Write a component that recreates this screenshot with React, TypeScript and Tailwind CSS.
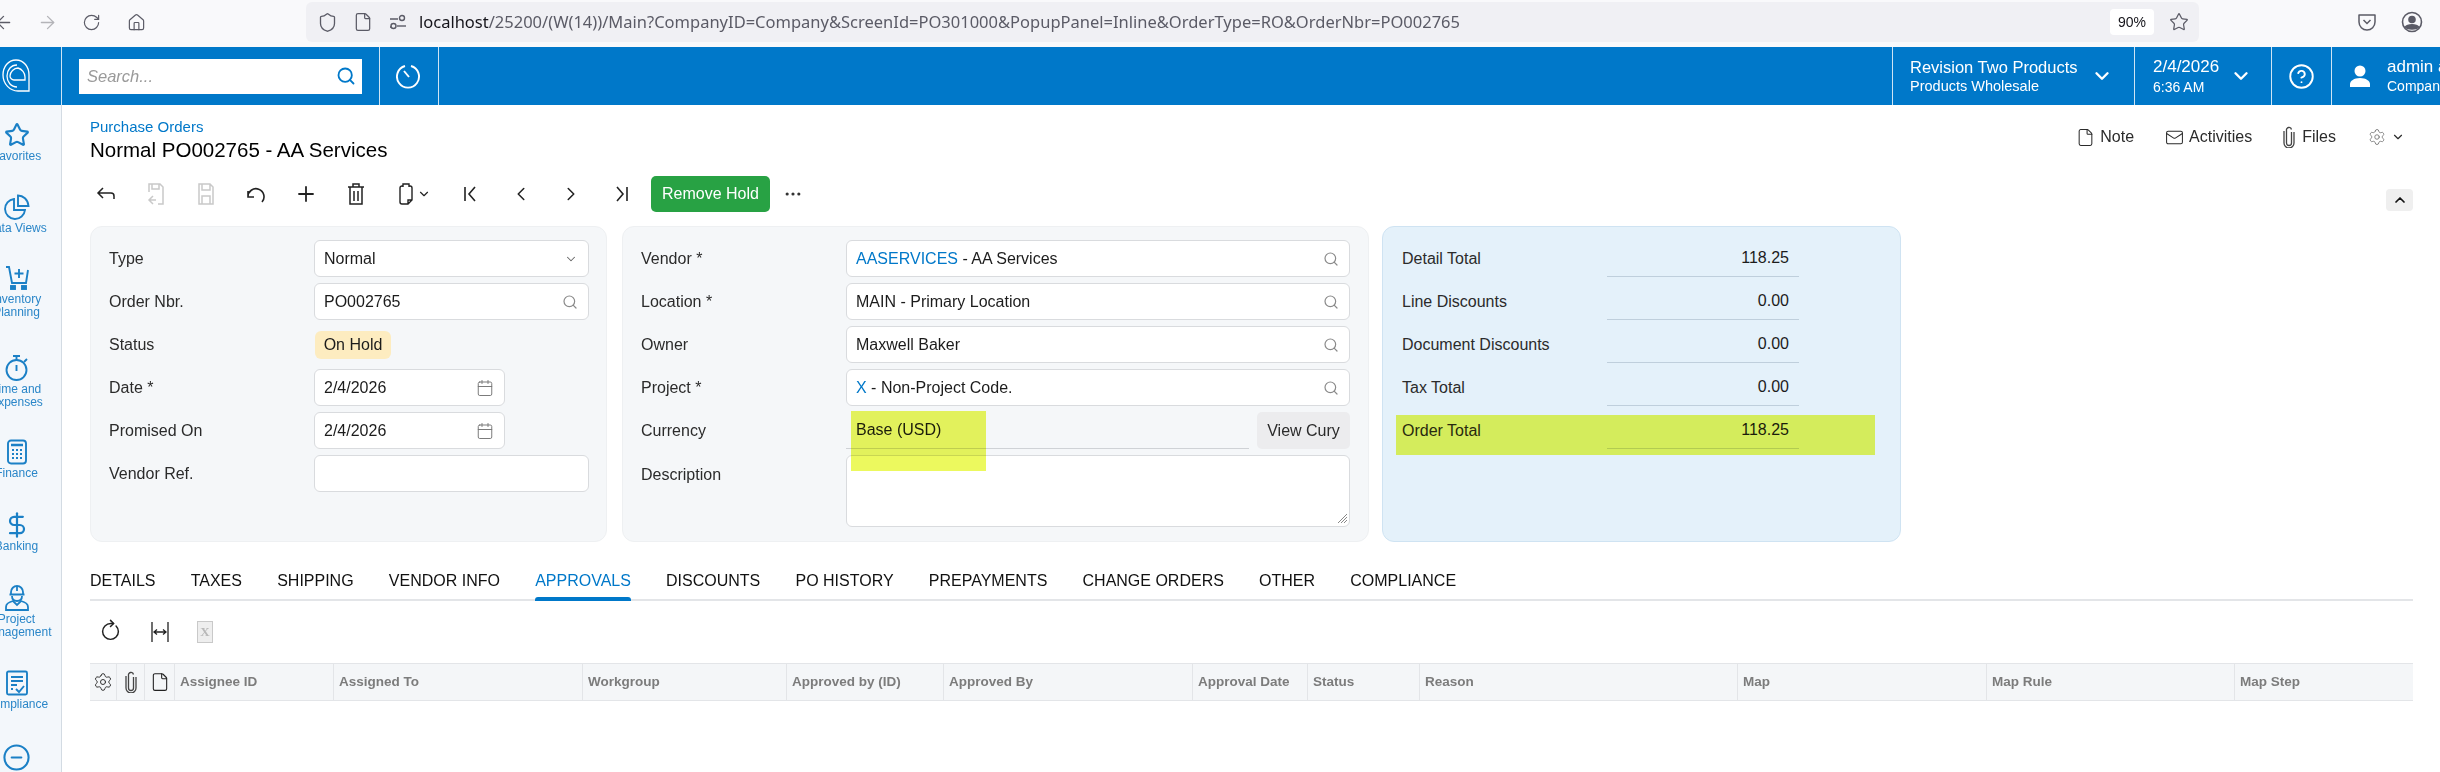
import { ArrowRight, Calendar, ChevronDown, ChevronLeft, ChevronRight, ChevronUp, CircleHelp, CircleMinus, DollarSign, Ellipsis, File, Home, Mail, Plus, RotateCw, Search, Settings, Shield, Star } from 'lucide-react'
import type { ReactNode } from 'react'

const Logo = () => (
    <svg width="30" height="36" viewBox="0 0 30 36" fill="none" stroke="white" strokeWidth="1.3">
        <path d="M15 2C7 2 2 9 2 17c0 9 7 16 15 16h11V17C28 9 23 2 15 2z" />
        <path d="M16 7C10 7 6 12 6 18c0 6 4 11 10 11" />
        <path d="M9 18c0-4 4-8 8-8 4 1 7 5 7 9v3H13c-2 0-4-2-4-4z" />
    </svg>
)

const Cart = () => (
    <svg width="26" height="26" viewBox="0 0 26 26" fill="none" stroke="#1b80c6" strokeWidth="1.9">
        <path d="M2 2h3l3 16h14l2-13" />
        <path d="M15 4v9M10.5 8.5h9" />
        <rect x="7" y="21" width="4" height="3" fill="#1b80c6" />
        <rect x="18" y="21" width="4" height="3" fill="#1b80c6" />
    </svg>
)

const Pie = () => (
    <svg width="26" height="26" viewBox="0 0 26 26" fill="none" stroke="#1b80c6" strokeWidth="1.9">
        <path d="M10 5a10 10 0 1 0 11 11H10z" />
        <path d="M14 1.5c5 0 10 4 10.500 10.500H14z" />
    </svg>
)

const Watch = () => (
    <svg width="26" height="28" viewBox="0 0 26 28" fill="none" stroke="#1b80c6" strokeWidth="1.9">
        <circle cx="12.500" cy="16" r="10" />
        <path d="M9 2h7M12.500 2v4M12.500 11v6M20 8l3-3" />
    </svg>
)

const Calc = () => (
    <svg width="22" height="26" viewBox="0 0 22 26" fill="none" stroke="#1b80c6" strokeWidth="1.9">
        <rect x="2" y="1.500" width="18" height="23" rx="3" />
        <path d="M5 6h12" strokeWidth="2.500" />
        <path d="M6 11h2M10 11h2M14 11h2M6 15h2M10 15h2M14 15h2M6 19h2M10 19h2M14 19h2" strokeWidth="2" />
    </svg>
)

const Worker = () => (
    <svg width="26" height="26" viewBox="0 0 26 26" fill="none" stroke="#1b80c6" strokeWidth="1.8">
        <path d="M7 9V7a6 6 0 0 1 12 0v2M5.500 9.500h15" />
        <path d="M13 1v5" />
        <path d="M8 11c0 3 2 5 5 5s5-2 5-5" />
        <path d="M2 25v-3c0-3 3-5 7-6l4 4 4-4c4 1 7 3 7 6v3z" />
    </svg>
)

const Checklist = () => (
    <svg width="24" height="26" viewBox="0 0 24 26" fill="none" stroke="#1b80c6" strokeWidth="1.9">
        <rect x="2" y="1.500" width="20" height="23" rx="1.500" />
        <path d="M6 7h12M6 11h12M6 15h6M6 19h2M11 19l3 3 5-6" />
    </svg>
)

const UserFill = () => (
    <svg width="22" height="24" viewBox="0 0 22 24" fill="white" className="shrink-0">
        <circle cx="11" cy="7" r="5.500" />
        <path d="M1 23v-3c0-3 4-6 10-6s10 3 10 6v3z" />
    </svg>
)

const Timer = () => (
    <svg width="26" height="28" viewBox="0 0 26 28" fill="none" stroke="white" strokeWidth="1.900">
        <path d="M9 4a11 11 0 1 0 6 0" />
        <path d="M8 9l5 6" />
    </svg>
)

const Pocket = () => (
    <svg width="20" height="20" viewBox="0 0 20 20" fill="none" stroke="#5b5b66" strokeWidth="1.500">
        <path d="M2 3h16v7a8 8 0 0 1-16 0z" strokeLinejoin="round" />
        <path d="M6.500 8l3.500 3.500L13.500 8" />
    </svg>
)

const Account = () => (
    <svg width="22" height="22" viewBox="0 0 22 22" fill="none" stroke="#5b5b66" strokeWidth="1.600">
        <circle cx="11" cy="11" r="9.500" />
        <circle cx="11" cy="8.500" r="3" fill="#5b5b66" />
        <path d="M4.500 16c2-3 11-3 13 0-2 2.500-11 2.500-13 0z" fill="#5b5b66" />
    </svg>
)

const Toggles = () => (
    <svg width="18" height="16" viewBox="0 0 18 16" fill="none" stroke="#5b5b66" strokeWidth="1.400">
        <path d="M1 5h8M1 13h1" />
        <circle cx="13" cy="4" r="2.500" />
        <circle cx="4.500" cy="12" r="2.500" />
        <path d="M8 12h9" />
    </svg>
)

const BackHook = () => (
    <svg width="22" height="22" viewBox="0 0 22 22" fill="none" stroke="#222" strokeWidth="1.500">
        <path d="M8 5l-5 5 5 5M3 10h13c2 0 3 1.500 3 3v3" />
    </svg>
)

const SaveBack = () => (
    <svg width="20" height="24" viewBox="0 0 20 24" fill="none" stroke="#c9c9c9" strokeWidth="1.500">
        <path d="M3 10V2h11l3 3v17h-5M6 2v5h7V2M7 14l-4 4 4 4M3 18h7" />
    </svg>
)

const SaveIcon = () => (
    <svg width="20" height="24" viewBox="0 0 20 24" fill="none" stroke="#c9c9c9" strokeWidth="1.500">
        <path d="M3 2h11l3 3v17H3zM6 2v6h8V2M6 22v-8h8v8" />
    </svg>
)

const UndoIcon = () => (
    <svg width="22" height="22" viewBox="0 0 22 22" fill="none" stroke="#222" strokeWidth="1.600">
        <path d="M3 8v6h6M3 14a8 8 0 1 1 14 5" />
    </svg>
)

const Trash = () => (
    <svg width="20" height="24" viewBox="0 0 20 24" fill="none" stroke="#222" strokeWidth="1.500">
        <path d="M2 5h16M7 5V2h6v3M4 5v17h12V5M8 9v10M12 9v10" />
    </svg>
)

const CopyDoc = () => (
    <svg width="14" height="24" viewBox="0 0 14 24" fill="none" stroke="#222" strokeWidth="1.400">
        <path d="M4 4H3a2 2 0 0 0-2 2v14a2 2 0 0 0 2 2h6l4-4V6a2 2 0 0 0-2-2h-1M4 5V2h6v3M9 22v-4h4" />
    </svg>
)

const BarChevron = ({ flip }: { flip?: boolean }) => (
    <svg width="20" height="22" viewBox="0 0 20 22" fill="none" stroke="#222" strokeWidth="1.600" className={flip ? 'rotate-180' : ''}>
        <path d="M4 4v14M14 4l-6 7 6 7" />
    </svg>
)

const Clip = ({ className = '' }: { className?: string }) => (
    <svg width="12" height="22" viewBox="0 0 12 22" fill="none" stroke="#444" strokeWidth="1.300" className={className}>
        <path d="M8.500 6v11a2.500 2.500 0 0 1-5 0V4.500a2.500 2.500 0 0 1 5-1M11 6v11a5 5 0 0 1-10 0V5" />
    </svg>
)

const sideItems = [
    { h: 'h-[72px]', icon: <Star size={26} strokeWidth={2} color="#1b80c6" />, label: ['Favorites'] },
    { h: 'h-[71px]', icon: <Pie />, label: ['Data Views'] },
    { h: 'h-[90px]', icon: <Cart />, label: ['Inventory', 'Planning'] },
    { h: 'h-[84px]', icon: <Watch />, label: ['Time and', 'Expenses'] },
    { h: 'h-[73px]', icon: <Calc />, label: ['Finance'] },
    { h: 'h-[73px]', icon: <DollarSign size={28} strokeWidth={1.9} color="#1b80c6" />, label: ['Banking'] },
    { h: 'h-[85px]', icon: <Worker />, label: ['Project', 'Management'] },
    { h: 'h-[74px]', icon: <Checklist />, label: ['Compliance'] },
    { h: 'h-[26px]', icon: <CircleMinus size={29} strokeWidth={1.700} color="#1b80c6" />, label: [] },
]

const Row = ({ label, children }: { label: string; children: ReactNode }) => (
    <div className="flex h-[37px] items-center">
        <div className="w-[205px] shrink-0 text-[#2b2b2b]">{label}</div>
        {children}
    </div>
)

const Input = ({ children, icon, width = 'w-[275px]' }: { children?: ReactNode; icon?: ReactNode; width?: string }) => (
    <div className={`${width} flex h-[37px] items-center justify-between rounded-[6px] border border-[#d9dbde] bg-white pl-[9px] pr-[10px] text-[#1c1c1c]`}>
        <span>{children}</span>
        {icon}
    </div>
)

const Lens = () => <Search size={16} strokeWidth={1.800} color="#8a8a8a" />
const Cal = () => <Calendar size={18} strokeWidth={1.300} color="#777" />

const TotalRow = ({ label, value }: { label: string; value: string }) => (
    <div className="flex h-[37px] items-center">
        <div className="w-[205px] shrink-0 text-[#2b2b2b]">{label}</div>
        <div className="flex h-[37px] w-[192px] items-center justify-end border-b border-[#bfcfdc] pr-[10px] text-[#1c1c1c]">{value}</div>
    </div>
)

const tabs = ['DETAILS', 'TAXES', 'SHIPPING', 'VENDOR INFO', 'APPROVALS', 'DISCOUNTS', 'PO HISTORY', 'PREPAYMENTS', 'CHANGE ORDERS', 'OTHER', 'COMPLIANCE']

const columns = [
    { w: 'w-[159px]', name: 'Assignee ID' },
    { w: 'w-[249px]', name: 'Assigned To' },
    { w: 'w-[204px]', name: 'Workgroup' },
    { w: 'w-[157px]', name: 'Approved by (ID)' },
    { w: 'w-[249px]', name: 'Approved By' },
    { w: 'w-[115px]', name: 'Approval Date' },
    { w: 'w-[112px]', name: 'Status' },
    { w: 'w-[318px]', name: 'Reason' },
    { w: 'w-[249px]', name: 'Map' },
    { w: 'w-[248px]', name: 'Map Rule' },
    { w: 'w-[179px]', name: 'Map Step' },
]

export default function App() {
    return (
        <div className="h-[772px] w-[2440px] overflow-hidden bg-white text-[16px] font-['Liberation_Sans',Arial,sans-serif]">
            {/* browser bar */}
            <div className="flex h-[47px] items-start bg-[#f9f9fb] pt-[2px]">
                <div className="flex h-[40px] w-[306px] shrink-0 items-center overflow-hidden text-[#5b5b66]">
                    <div className="-ml-[19px] flex w-[44px] shrink-0 justify-center"><ArrowRight size={21} strokeWidth={1.500} className="rotate-180" /></div>
                    <div className="flex w-[44px] shrink-0 justify-center"><ArrowRight size={21} strokeWidth={1.500} color="#b4b4b8" /></div>
                    <div className="flex w-[45px] shrink-0 justify-center"><RotateCw size={19} strokeWidth={1.500} /></div>
                    <div className="flex w-[44px] shrink-0 justify-center"><Home size={19} strokeWidth={1.500} /></div>
                </div>
                <div className="flex h-[40px] w-[1893px] shrink-0 items-center rounded-[6px] bg-[#f0f0f4] pl-[11px] text-[#5b5b66]">
                    <Shield size={21} strokeWidth={1.500} />
                    <File size={20} strokeWidth={1.500} className="ml-[15px]" />
                    <div className="ml-[16px]"><Toggles /></div>
                    <div className="ml-[12px] whitespace-nowrap font-['Noto_Sans',sans-serif] text-[16.500px]"><span className="text-[#15141a]">localhost</span>/25200/(W(14))/Main?CompanyID=Company&amp;ScreenId=PO301000&amp;PopupPanel=Inline&amp;OrderType=RO&amp;OrderNbr=PO002765</div>
                    <div className="ml-auto flex h-[26px] w-[44px] items-center justify-center rounded-[4px] bg-white text-[14px] text-[#15141a]">90%</div>
                    <Star size={20} strokeWidth={1.500} className="ml-[15px] mr-[10px]" />
                </div>
                <div className="flex h-[40px] flex-1 items-center">
                    <div className="ml-[158px]"><Pocket /></div>
                    <div className="ml-[24px]"><Account /></div>
                </div>
            </div>

            {/* blue header */}
            <div className="flex h-[58px] items-stretch bg-[#0078c9] text-white">
                <div className="flex w-[62px] shrink-0 items-center justify-start border-r border-[#cfe4f4] pl-[1px]"><Logo /></div>
                <div className="flex w-[318px] shrink-0 items-center border-r border-[#cfe4f4] pl-[17px]">
                    <div className="flex h-[35px] w-[283px] items-center justify-between bg-white pl-[8px] pr-[6px] text-[16.500px] italic text-[#9a9a9a]">
                        Search...
                        <Search size={20} strokeWidth={2.200} color="#0078c9" />
                    </div>
                </div>
                <div className="flex w-[59px] shrink-0 items-center justify-center border-r border-[#cfe4f4]"><Timer /></div>
                <div className="flex-1" />
                <div className="flex w-[242px] shrink-0 items-center border-l border-[#cfe4f4] pl-[17px]">
                    <div className="w-[172px] whitespace-nowrap">
                        <div className="text-[16.500px] leading-[20px]">Revision Two Products</div>
                        <div className="text-[14.500px] leading-[18px]">Products Wholesale</div>
                    </div>
                    <ChevronDown size={22} strokeWidth={2.600} className="ml-[9px]" />
                </div>
                <div className="flex w-[137px] shrink-0 items-center border-l border-[#cfe4f4] pl-[18px]">
                    <div className="w-[73px]">
                        <div className="text-[17px] leading-[21px]">2/4/2026</div>
                        <div className="text-[14px] leading-[20px]">6:36 AM</div>
                    </div>
                    <ChevronDown size={22} strokeWidth={2.600} className="ml-[4px]" />
                </div>
                <div className="flex w-[60px] shrink-0 items-center justify-center border-l border-[#cfe4f4]"><CircleHelp size={27} strokeWidth={1.700} /></div>
                <div className="flex w-[109px] shrink-0 items-center overflow-hidden border-l border-[#cfe4f4] pl-[17px]">
                    <UserFill />
                    <div className="ml-[16px] whitespace-nowrap">
                        <div className="text-[17px] leading-[21px]">admin admin</div>
                        <div className="text-[14px] leading-[19px]">Company</div>
                    </div>
                </div>
            </div>

            <div className="flex h-[667px]">
                {/* side nav */}
                <div className="w-[62px] shrink-0 overflow-hidden border-r border-[#d3dbe3] bg-[#f3f7fb] pt-[17px]">
                    <div className="-ml-[20px] w-[73px]">
                        {sideItems.map((item) => (
                            <div key={item.h + item.label.join()} className={`${item.h} flex flex-col items-center`}>
                                <div className="flex h-[26px] items-center justify-center">{item.icon}</div>
                                <div className="mt-[2px] whitespace-nowrap text-center text-[12px] leading-[13px] text-[#2a86c8]">
                                    {item.label.map((l) => <div key={l}>{l}</div>)}
                                </div>
                            </div>
                        ))}
                    </div>
                </div>

                {/* page */}
                <div className="w-[2351px] shrink-0 pl-[28px] pt-[13px]">
                    <div className="flex items-start justify-between">
                        <div>
                            <div className="text-[15px] leading-[18px] text-[#0078c9]">Purchase Orders</div>
                            <div className="mt-[1px] text-[20.500px] leading-[26px] text-black">Normal PO002765 - AA Services</div>
                        </div>
                        <div className="mr-[8px] mt-[9px] flex h-[20px] items-center text-[16px] text-[#2b2b2b]">
                            <File size={19} strokeWidth={1.300} />
                            <span className="ml-[5px]">Note</span>
                            <Mail size={19} strokeWidth={1.300} className="ml-[31px]" />
                            <span className="ml-[5px]">Activities</span>
                            <Clip className="ml-[31px]" />
                            <span className="ml-[7px]">Files</span>
                            <Settings size={18} strokeWidth={1.200} color="#777" className="ml-[32px]" />
                            <ChevronDown size={14} strokeWidth={2} className="ml-[5px]" />
                        </div>
                    </div>

                    <div className="mt-[13px] flex h-[36px] items-center justify-between">
                        <div className="-ml-[9px] flex items-center">
                            <div className="flex w-[50px] justify-center"><BackHook /></div>
                            <div className="flex w-[50px] justify-center"><SaveBack /></div>
                            <div className="flex w-[50px] justify-center"><SaveIcon /></div>
                            <div className="flex w-[50px] justify-center"><UndoIcon /></div>
                            <div className="flex w-[50px] justify-center"><Plus size={24} strokeWidth={1.800} color="#222" /></div>
                            <div className="flex w-[50px] justify-center"><Trash /></div>
                            <div className="flex w-[50px] items-center justify-center"><CopyDoc /><ChevronDown size={14} strokeWidth={2} color="#222" className="-mr-[18px] ml-[4px]" /></div>
                            <div className="ml-[15px] flex w-[50px] justify-center"><BarChevron /></div>
                            <div className="flex w-[50px] justify-center"><ChevronLeft size={22} strokeWidth={1.700} color="#222" /></div>
                            <div className="flex w-[50px] justify-center"><ChevronRight size={22} strokeWidth={1.700} color="#222" /></div>
                            <div className="flex w-[50px] justify-center"><BarChevron flip /></div>
                            <div className="ml-[5px] flex h-[36px] w-[119px] items-center justify-center rounded-[5px] bg-[#28a244] text-[16px] text-white">Remove Hold</div>
                            <div className="ml-[13px]"><Ellipsis size={20} strokeWidth={1.800} color="#333" /></div>
                        </div>
                        <div className="mt-[12px] flex h-[22px] w-[27px] items-center justify-center rounded-[4px] bg-[#efefef]"><ChevronUp size={16} strokeWidth={2.600} color="#111" /></div>
                    </div>

                    {/* summary panels */}
                    <div className="mt-[14px] flex h-[316px] items-stretch">
                        <div className="flex w-[517px] flex-col gap-[6px] rounded-[12px] border border-[#eef0f2] bg-[#f5f7f9] pl-[18px] pt-[13px]">
                            <Row label="Type"><Input icon={<ChevronDown size={14} strokeWidth={1.800} color="#666" />}>Normal</Input></Row>
                            <Row label="Order Nbr."><Input icon={<Lens />}>PO002765</Input></Row>
                            <Row label="Status"><div className="ml-[1px] flex h-[28px] w-[76px] items-center justify-center rounded-[6px] bg-[#fdecc0] text-[#1c1c1c]">On Hold</div></Row>
                            <Row label="Date *"><Input width="w-[191px]" icon={<Cal />}>2/4/2026</Input></Row>
                            <Row label="Promised On"><Input width="w-[191px]" icon={<Cal />}>2/4/2026</Input></Row>
                            <Row label="Vendor Ref."><Input /></Row>
                        </div>

                        <div className="relative ml-[15px] flex w-[747px] flex-col gap-[6px] rounded-[12px] border border-[#eef0f2] bg-[#f5f7f9] pl-[18px] pt-[13px]">
                            <Row label="Vendor *"><Input width="w-[504px]" icon={<Lens />}><span className="text-[#0078c9]">AASERVICES</span> - AA Services</Input></Row>
                            <Row label="Location *"><Input width="w-[504px]" icon={<Lens />}>MAIN - Primary Location</Input></Row>
                            <Row label="Owner"><Input width="w-[504px]" icon={<Lens />}>Maxwell Baker</Input></Row>
                            <Row label="Project *"><Input width="w-[504px]" icon={<Lens />}><span className="text-[#0078c9]">X</span> - Non-Project Code.</Input></Row>
                            <Row label="Currency">
                                <div className="flex h-[37px] w-[403px] items-center border-b border-[#cfd2d6] pl-[10px] text-[#1c1c1c]">Base (USD)</div>
                                <div className="ml-[8px] flex h-[37px] w-[93px] items-center justify-center rounded-[5px] bg-[#ececee] text-[#2b2b2b]">View Cury</div>
                            </Row>
                            <div className="flex h-[72px]">
                                <div className="w-[205px] shrink-0 pt-[8px] text-[#2b2b2b]">Description</div>
                                <div className="relative h-[72px] w-[504px] rounded-[6px] border border-[#d9dbde] bg-white">
                                    <svg width="12" height="12" viewBox="0 0 12 12" stroke="#888" strokeWidth="1" className="absolute bottom-[2px] right-[1px]">
                                        <path d="M11 2 2 11M11 5 5 11M11 8 8 11" />
                                    </svg>
                                </div>
                            </div>
                            <div className="absolute left-[228px] top-[184px] h-[60px] w-[135px] bg-[#ecf95e] mix-blend-multiply" />
                        </div>

                        <div className="relative ml-[13px] flex w-[519px] flex-col gap-[6px] rounded-[12px] border border-[#cfe3f2] bg-[#e4f1fa] pl-[19px] pt-[13px]">
                            <TotalRow label="Detail Total" value="118.25" />
                            <TotalRow label="Line Discounts" value="0.00" />
                            <TotalRow label="Document Discounts" value="0.00" />
                            <TotalRow label="Tax Total" value="0.00" />
                            <TotalRow label="Order Total" value="118.25" />
                            <div className="absolute left-[13px] top-[188px] h-[40px] w-[479px] bg-[#eefa5e] mix-blend-multiply" />
                        </div>
                    </div>

                    {/* tabs */}
                    <div className="mt-[26px] flex h-[33px] w-[2323px] gap-[35.200px] border-b-2 border-[#e3e5e8]">
                        {tabs.map((tab) => (
                            <div key={tab} className={tab === 'APPROVALS' ? 'relative h-[33px] text-[16px] leading-[25px] text-[#0078c9]' : 'h-[33px] text-[16px] leading-[25px] text-[#111]'}>
                                {tab}
                                {tab === 'APPROVALS' && <div className="absolute bottom-0 left-0 h-[4px] w-full rounded-t-[3px] bg-[#0078c9]" />}
                            </div>
                        ))}
                    </div>

                    {/* grid toolbar */}
                    <div className="flex h-[62px] items-center pb-[1px] pl-[8px]">
                        <div className="flex w-[24px] justify-center"><RotateCw size={21} strokeWidth={1.700} color="#222" className="-rotate-45" /></div>
                        <div className="ml-[26px] flex w-[24px] items-center justify-center">
                            <svg width="20" height="22" viewBox="0 0 20 22" fill="none" stroke="#222" strokeWidth="1.300">
                                <path d="M2 1v20M18 1v20M4 11h12M7 8.500 4 11l3 2.500M13 8.500l3 2.500-3 2.500" />
                            </svg>
                        </div>
                        <div className="ml-[25px] flex h-[22px] w-[16px] items-center justify-center border border-[#c9c9c9] bg-[#eeeeee] font-['Liberation_Serif',serif] text-[13px] font-bold text-[#b9b9b9]">X</div>
                    </div>

                    {/* grid header */}
                    <div className="flex h-[38px] w-[2323px] border-y border-[#e3e5e8] bg-[#f4f6f8] text-[13.500px] font-bold text-[#7c7c7c]">
                        <div className="flex w-[27px] shrink-0 items-center justify-center border-r border-[#e3e5e8]"><Settings size={20} strokeWidth={1.200} color="#333" /></div>
                        <div className="flex w-[28px] shrink-0 items-center justify-center border-r border-[#e3e5e8]"><Clip /></div>
                        <div className="flex w-[30px] shrink-0 items-center justify-center border-r border-[#e3e5e8]"><File size={20} strokeWidth={1.300} color="#222" /></div>
                        {columns.map((col) => (
                            <div key={col.name} className={`${col.w} flex shrink-0 items-center border-r border-[#e3e5e8] pl-[5px] last:border-r-0`}>{col.name}</div>
                        ))}
                    </div>
                </div>
            </div>
        </div>
    )
}
